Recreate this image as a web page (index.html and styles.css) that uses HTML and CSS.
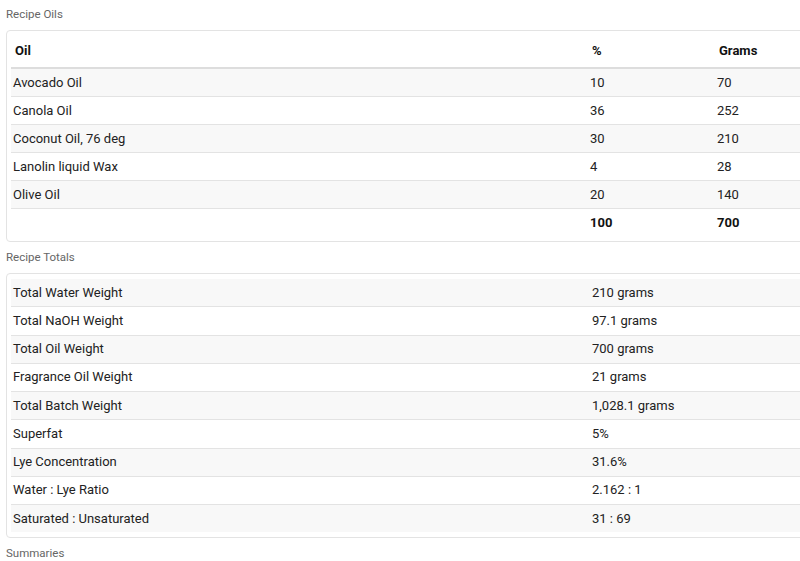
FILE: index.html
```html
<!DOCTYPE html>
<html>
<head>
<meta charset="utf-8">
<link rel="stylesheet" href="styles.css">
</head>
<body>
<div class="page">
  <div class="label">Recipe Oils</div>
  <div class="card card-oils">
    <table class="tbl oils">
      <colgroup><col class="c1"><col class="c2"><col class="c3"></colgroup>
      <thead>
        <tr><th>Oil</th><th>%</th><th>Grams</th></tr>
      </thead>
      <tbody>
        <tr><td>Avocado Oil</td><td>10</td><td>70</td></tr>
        <tr><td>Canola Oil</td><td>36</td><td>252</td></tr>
        <tr><td>Coconut Oil, 76 deg</td><td>30</td><td>210</td></tr>
        <tr><td>Lanolin liquid Wax</td><td>4</td><td>28</td></tr>
        <tr><td>Olive Oil</td><td>20</td><td>140</td></tr>
        <tr class="total"><td></td><td>100</td><td>700</td></tr>
      </tbody>
    </table>
  </div>
  <div class="label label-gap">Recipe Totals</div>
  <div class="card card-totals">
    <table class="tbl totals">
      <colgroup><col class="t1"><col class="t2"></colgroup>
      <tbody>
        <tr><td>Total Water Weight</td><td>210 grams</td></tr>
        <tr><td>Total NaOH Weight</td><td>97.1 grams</td></tr>
        <tr><td>Total Oil Weight</td><td>700 grams</td></tr>
        <tr><td>Fragrance Oil Weight</td><td>21 grams</td></tr>
        <tr><td>Total Batch Weight</td><td>1,028.1 grams</td></tr>
        <tr><td>Superfat</td><td>5%</td></tr>
        <tr><td>Lye Concentration</td><td>31.6%</td></tr>
        <tr><td>Water : Lye Ratio</td><td>2.162 : 1</td></tr>
        <tr><td>Saturated : Unsaturated</td><td>31 : 69</td></tr>
      </tbody>
    </table>
  </div>
  <div class="label label-gap">Summaries</div>
</div>
</body>
</html>
```

FILE: styles.css
```css
html, body {
  margin: 0;
  padding: 0;
  background: #ffffff;
  overflow: hidden;
}
body {
  font-family: Roboto, "Liberation Sans", sans-serif;
  color: #222222;
  font-size: 13px;
}
.page {
  padding: 0 0 0 6px;
  width: 1000px;
}
.label {
  font-size: 11.5px;
  line-height: 16px;
  color: #666666;
  margin: 6px 0 8px 0;
}
.label-gap {
  margin-top: 7px;
}
.card {
  border: 1px solid #e3e3e3;
  border-radius: 4px;
  padding: 4px;
  margin-bottom: 3px;
}
.card-oils {
  padding-bottom: 5px;
}
.card-totals {
  padding-top: 5px;
  padding-bottom: 5px;
}
.tbl {
  width: 100%;
  border-collapse: collapse;
  table-layout: fixed;
}
.tbl td, .tbl th {
  text-align: left;
  padding: 0 2px;
  height: 27px;
  line-height: 16px;
  border-bottom: 1px solid #e3e3e3;
  white-space: nowrap;
}
.totals td {
  height: 27.25px;
}
.tbl th {
  font-weight: bold;
  color: #111111;
  height: 32px;
  border-bottom: 2px solid #dddddd;
  padding-left: 4px;
}
.tbl tbody tr:nth-child(odd) td {
  background: #f8f8f8;
}
.tbl tr:last-child td {
  border-bottom: none;
}
.oils .c1 { width: 577px; }
.oils .c2 { width: 127px; }
.totals .t1 { width: 579px; }
.total td {
  font-weight: bold;
  color: #111111;
}
```
